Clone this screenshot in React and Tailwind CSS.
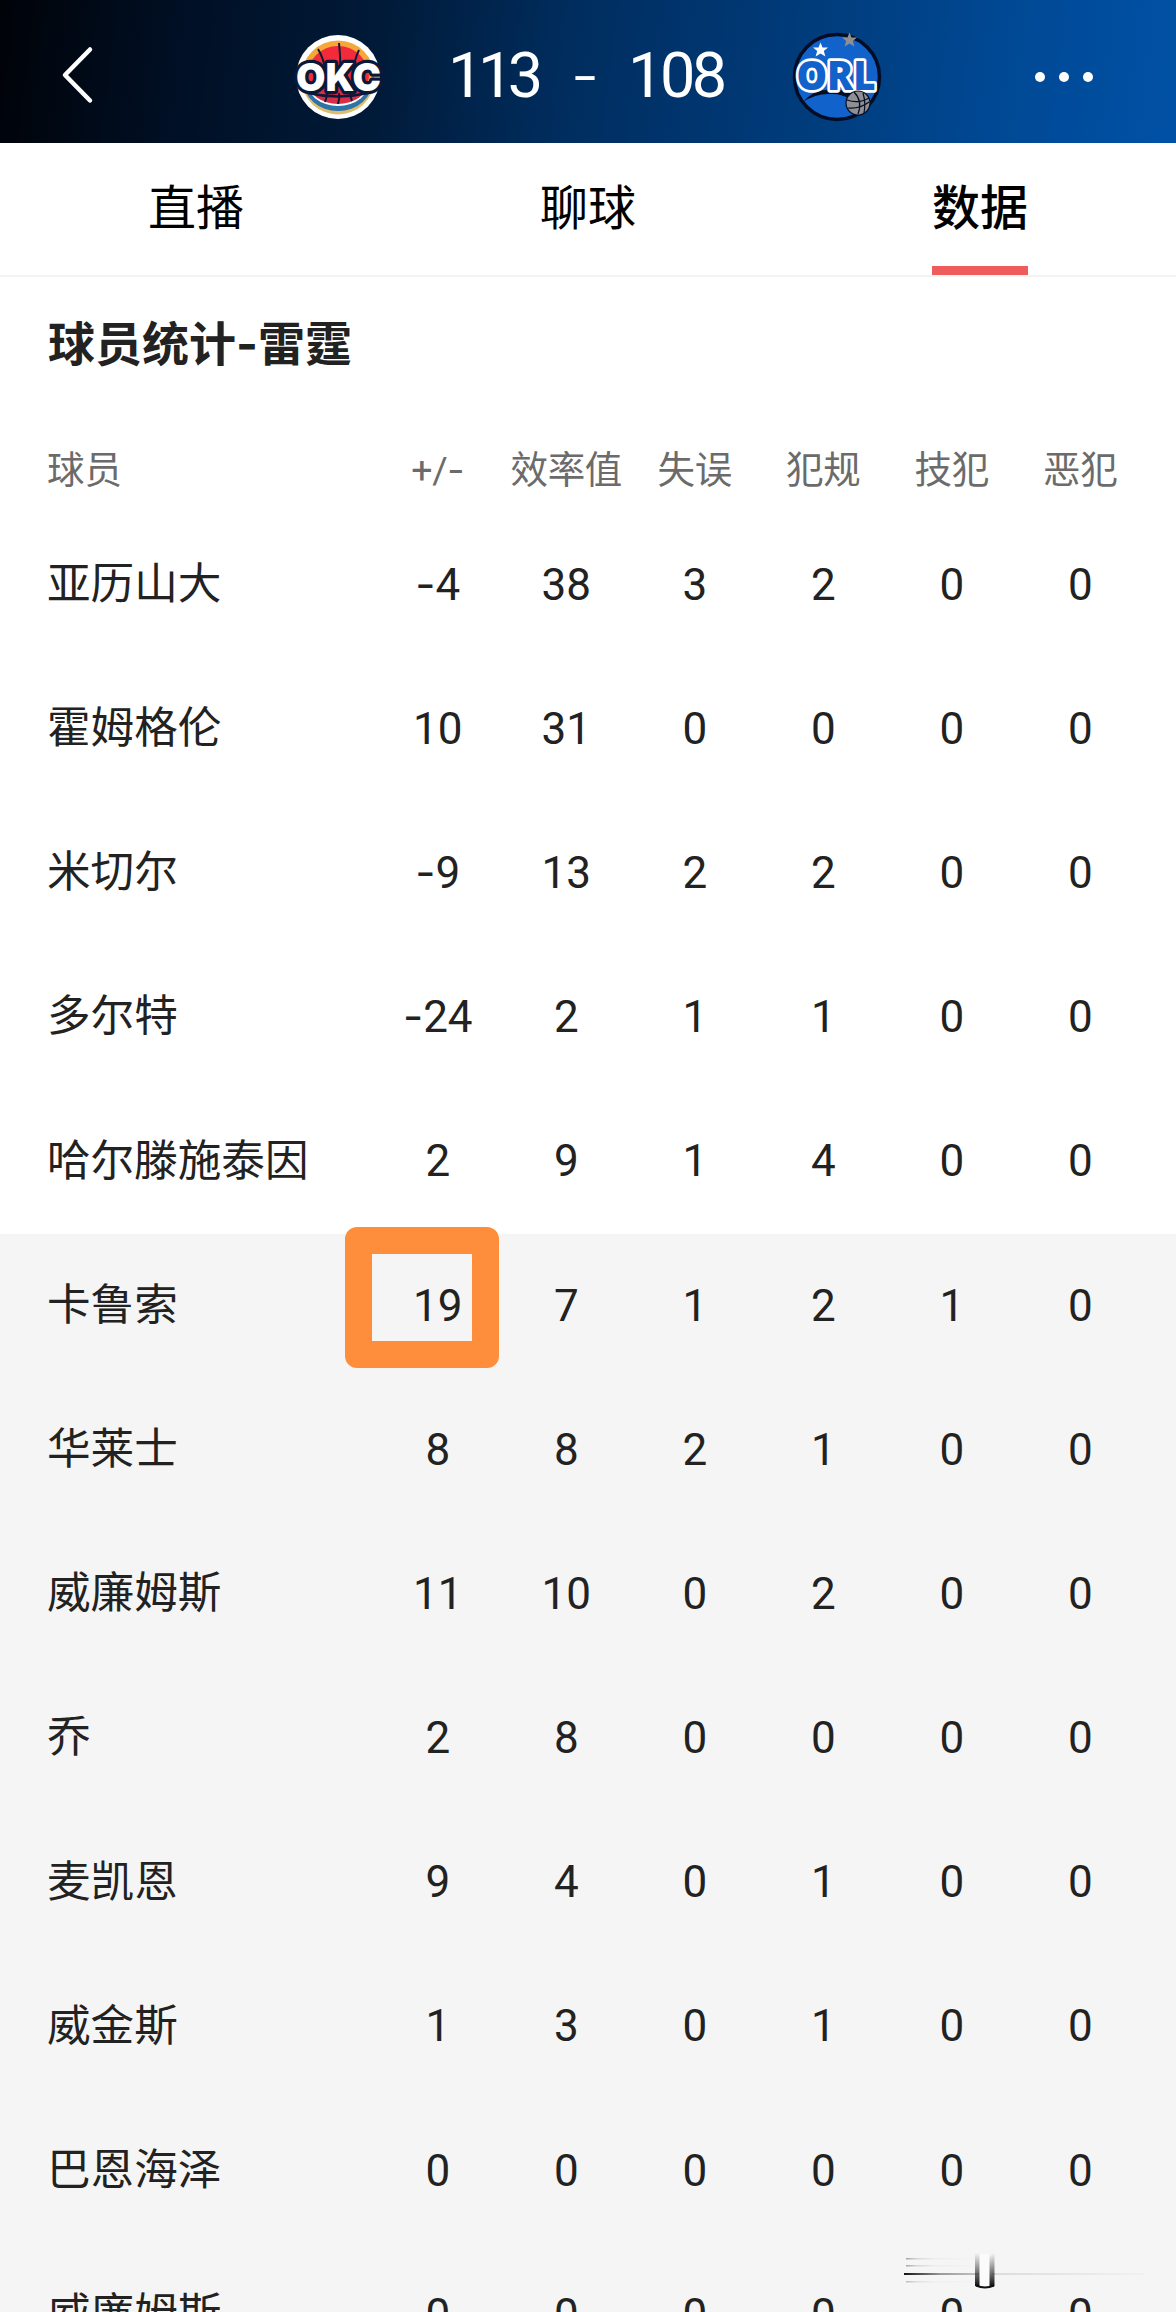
import clsx from "clsx";
import { useState } from "react";

const tabs = ["直播", "聊球", "数据"];

const columns = ["+/-", "效率值", "失误", "犯规", "技犯", "恶犯"];

const STARTERS = 5;

const players = [
    { name: "亚历山大", stats: [-4, 38, 3, 2, 0, 0] },
    { name: "霍姆格伦", stats: [10, 31, 0, 0, 0, 0] },
    { name: "米切尔", stats: [-9, 13, 2, 2, 0, 0] },
    { name: "多尔特", stats: [-24, 2, 1, 1, 0, 0] },
    { name: "哈尔滕施泰因", stats: [2, 9, 1, 4, 0, 0] },
    { name: "卡鲁索", stats: [19, 7, 1, 2, 1, 0], marked: 0 },
    { name: "华莱士", stats: [8, 8, 2, 1, 0, 0] },
    { name: "威廉姆斯", stats: [11, 10, 0, 2, 0, 0] },
    { name: "乔", stats: [2, 8, 0, 0, 0, 0] },
    { name: "麦凯恩", stats: [9, 4, 0, 1, 0, 0] },
    { name: "威金斯", stats: [1, 3, 0, 1, 0, 0] },
    { name: "巴恩海泽", stats: [0, 0, 0, 0, 0, 0] },
    { name: "威廉姆斯", stats: [0, 0, 0, 0, 0, 0] },
];

// Roboto's hyphen is too short next to the digits, Inter has a wider one
function Hyphenated({ text }) {
    return String(text)
        .split(/(-)/)
        .map((part, index) =>
            part === "-" ? (
                <span key={ index } className="font-['Inter'] leading-none">-</span>
            ) : (
                part
            )
        );
}

function OkcLogo() {
    return (
        <svg viewBox="0 0 90 90" className="h-[90px] w-[90px] overflow-visible">
            <circle cx="46" cy="45" r="42" fill="#fff" />
            <circle cx="46" cy="45" r="36.5" fill="#f5a839" />
            <path d="M10 48a36 34.500 0 0 0 72 0z" fill="#e0bd6c" />
            <path d="M11 48a35 31 0 0 0 70 0z" fill="#2b73a8" />
            <path d="M14 48a32 26 0 0 0 64 0z" fill="#fff" />
            <path d="M15 45a31 31 0 0 1 62 0l-1 5a31 22 0 0 1-60 0z" fill="#f22a3a" />
            <path d="M16 50a30 22 0 0 0 60 0z" fill="#d92d45" />
            <path
                d="M26 17q6 10 8 24M47 11q2 20 1 30M67 18q-5 10-6 24M33 70q2-5 2-9M46 72q2-6 1-11M60 69q-2-4-1-8"
                fill="none"
                stroke="#0b1838"
                strokeWidth="2"
            />
            <path d="M16 61q30 7 60 0" fill="none" stroke="#0b1838" strokeWidth="2.500" />
            <text
                x="46.500"
                y="59"
                textAnchor="middle"
                textLength="85"
                lengthAdjust="spacingAndGlyphs"
                fontSize="38"
                fill="#fff"
                stroke="#0b1838"
                strokeWidth="6.500"
                strokeLinejoin="round"
                paintOrder="stroke"
                className="font-['Inter'] font-black"
            >
                OKC
            </text>
        </svg>
    );
}

function OrlLogo() {
    return (
        <svg viewBox="0 0 90 90" className="h-[90px] w-[90px] overflow-visible">
            <circle cx="45" cy="45" r="42.500" fill="#1262cb" stroke="#040d24" strokeWidth="3.500" />
            <path d="M11 70q13-15 34-12 18 0 22 6l-13 1q-24-8-43 5z" fill="#040d24" />
            <path d="M29 64q16-5 28 3-14-4-28-3z" fill="#1262cb" />
            <path d="M28.500 10.500l2 5h5.500l-4.200 3.500 1.600 5.600-4.900-3.100-4.900 3.100 1.600-5.600-4.200-3.500h5.500z" fill="#fff" />
            <path d="M57.500 0.500l2 5h5.500l-4.200 3.500 1.600 5.600-4.900-3.100-4.900 3.100 1.600-5.600-4.200-3.500h5.500z" fill="#909090" />
            <text
                x="44"
                y="57.500"
                textAnchor="middle"
                textLength="79"
                lengthAdjust="spacingAndGlyphs"
                fontSize="40"
                fill="#1262cb"
                stroke="#fff"
                strokeWidth="5.500"
                strokeLinejoin="round"
                paintOrder="stroke"
                className="font-['Open_Sans'] font-extrabold"
            >
                ORL
            </text>
            <circle cx="66" cy="71" r="12" fill="#909094" stroke="#040d24" strokeWidth="1.200" />
            <path
                d="M55 68q12 4 22-2M56 76q12 1 21-6M62 60q9 9 4 22M71 61q3 10 1 20"
                fill="none"
                stroke="#040d24"
                strokeWidth="1.200"
            />
        </svg>
    );
}

function Header() {
    return (
        <header className="flex h-[143px] items-center bg-[linear-gradient(97deg,#000308_0%,#000f24_15%,#001a38_32%,#002d5e_48%,#003a78_66%,#004893_84%,#0051a6_100%)] pt-[11px]">
            <button className="mb-1 ml-[60px] mr-[198px]" aria-label="返回">
                <svg viewBox="0 0 34 60" className="h-[60px] w-[34px]">
                    <path
                        d="M30 4.500L5 30l25 25.500"
                        fill="none"
                        stroke="#fff"
                        strokeWidth="4.500"
                        strokeLinecap="round"
                        strokeLinejoin="round"
                    />
                </svg>
            </button>
            <div className="flex w-[590px] items-center">
                <OkcLogo />
                <div className="flex flex-1 items-center pb-1 pl-[66px] text-[63px] leading-none text-white">
                    <span className="w-[94px] tracking-[-5.500px]">113</span>
                    <span className="w-[86px] text-center font-['Inter'] font-light">-</span>
                    <span className="w-[96px] tracking-[-3.500px]">108</span>
                </div>
                <OrlLogo />
            </div>
            <button className="ml-[153px] flex gap-[14px]" aria-label="更多">
                <span className="size-2.5 rounded-full bg-white" />
                <span className="size-2.5 rounded-full bg-white" />
                <span className="size-2.5 rounded-full bg-white" />
            </button>
        </header>
    );
}

function PlayerRow({ player, bench }) {
    return (
        <div className={ clsx("flex h-[144.200px] items-center pb-px pl-[47px] text-[44px] text-[#222]", bench ? "bg-[#f5f5f5]" : "bg-white") }>
            <span className="w-[326.500px] whitespace-nowrap text-[43.600px]">{ player.name }</span>
            { player.stats.map((value, index) => (
                <span key={ index } className="relative w-[128.500px] whitespace-nowrap text-center">
                    <Hyphenated text={ value } />
                    { player.marked === index && (
                        <span className="absolute left-[-28.500px] top-1/2 h-[141px] w-[154px] -translate-y-[79px] rounded-[12px] border-[27px] border-[#ff8e3c]" />
                    ) }
                </span>
            )) }
        </div>
    );
}

function Watermark() {
    return (
        <svg viewBox="0 0 250 40" className="absolute bottom-[22px] right-[24px] h-[40px] w-[250px]">
            <defs>
                <linearGradient id="streak" x1="0" x2="1" y1="0" y2="0">
                    <stop offset="0" stopColor="#111" />
                    <stop offset="0.150" stopColor="#999" />
                    <stop offset="0.400" stopColor="#ddd" />
                    <stop offset="1" stopColor="#f1f1f1" />
                </linearGradient>
                <linearGradient id="bar" x1="0" x2="0" y1="0" y2="1">
                    <stop offset="0" stopColor="#222" stopOpacity="0" />
                    <stop offset="1" stopColor="#111" />
                </linearGradient>
            </defs>
            <rect x="4" y="8" width="70" height="1.500" fill="url(#streak)" opacity="0.350" />
            <rect x="4" y="15" width="70" height="1.500" fill="url(#streak)" opacity="0.350" />
            <rect x="2" y="23" width="240" height="2" fill="url(#streak)" />
            <rect x="4" y="31" width="70" height="1.500" fill="url(#streak)" opacity="0.250" />
            <rect x="77" y="4" width="13" height="32" fill="#fbfbfb" />
            <rect x="73" y="3" width="4.500" height="33" fill="url(#bar)" />
            <rect x="87.500" y="3" width="5" height="33" fill="url(#bar)" />
            <path d="M74 35.500q9 4 18 0" fill="none" stroke="#111" strokeWidth="2" />
        </svg>
    );
}

export default function App() {
    const [activeTab, setActiveTab] = useState("数据");

    return (
        <div className="relative h-[2312px] w-[1176px] overflow-hidden bg-white font-['Roboto','Noto_Sans_CJK_SC',sans-serif]">
            <Header />

            <nav className="grid h-[134px] grid-cols-3 border-b-2 border-[#f3f3f3]">
                { tabs.map((tab) => (
                    <button
                        key={ tab }
                        onClick={ () => setActiveTab(tab) }
                        className="flex flex-col items-center justify-between pt-[30px] text-[48px] leading-[72px] text-black"
                    >
                        <span className={ tab === activeTab ? "font-medium" : "" }>{ tab }</span>
                        <span className={ clsx("h-[9px] w-24", tab === activeTab && "bg-[#ee5d5b]") } />
                    </button>
                )) }
            </nav>

            <h2 className="h-[101px] pl-12 pt-[33px] text-[47px] font-bold leading-[70px] text-[#222]">
                <Hyphenated text="球员统计-雷霆" />
            </h2>

            <div className="flex h-[135px] items-center pl-[47px] pt-[48px] text-[37.500px] leading-[56px] text-[#6b6b6b]">
                <span className="w-[326.500px]">球员</span>
                { columns.map((column) => (
                    <span key={ column } className="w-[128.500px] whitespace-nowrap text-center tracking-[-0.300px]">
                        <Hyphenated text={ column } />
                    </span>
                )) }
            </div>

            { players.map((player, index) => (
                <PlayerRow key={ index } player={ player } bench={ index >= STARTERS } />
            )) }

            <Watermark />
        </div>
    );
}
